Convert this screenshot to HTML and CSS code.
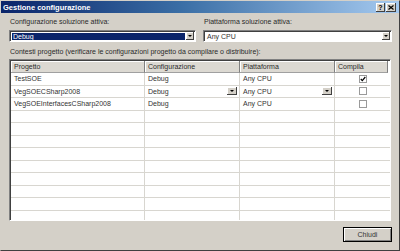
FILE: index.html
```html
<!DOCTYPE html>
<html>
<head>
<meta charset="utf-8">
<link rel="stylesheet" href="styles.css">
</head>
<body>
<div class="window">
  <div class="titlebar">
    <span class="title">Gestione configurazione</span>
    <div class="tbtns">
      <span class="tbtn help">?</span>
      <span class="tbtn close"><svg width="6" height="5" viewBox="0 0 6 5"><path d="M0.5 0.5 L5.5 4.5 M5.5 0.5 L0.5 4.5" stroke="#000" stroke-width="1.2"/></svg></span>
    </div>
  </div>
  <div class="content">
    <div class="top">
      <div class="field">
        <div class="label">Configurazione soluzione attiva:</div>
        <div class="combo">
          <span class="val sel">Debug</span>
          <span class="arrow"><i class="tri"></i></span>
        </div>
      </div>
      <div class="field">
        <div class="label">Piattaforma soluzione attiva:</div>
        <div class="combo">
          <span class="val">Any CPU</span>
          <span class="arrow"><i class="tri"></i></span>
        </div>
      </div>
    </div>
    <div class="caption">Contesti progetto (verificare le configurazioni progetto da compilare o distribuire):</div>
    <div class="list">
      <div class="grid">
        <div class="hd">Progetto</div>
        <div class="hd">Configurazione</div>
        <div class="hd">Piattaforma</div>
        <div class="hd last">Compila</div>

        <div class="c">TestSOE</div>
        <div class="c">Debug</div>
        <div class="c">Any CPU</div>
        <div class="c chk"><span class="box"><svg width="6" height="6" viewBox="0 0 6 6"><path d="M0.8 3 L2.3 4.6 L5.3 1" fill="none" stroke="#000" stroke-width="1.2"/></svg></span></div>

        <div class="c">VegSOECSharp2008</div>
        <div class="c">Debug<span class="dd"><i class="tri"></i></span></div>
        <div class="c">Any CPU<span class="dd"><i class="tri"></i></span></div>
        <div class="c chk"><span class="box"></span></div>

        <div class="c">VegSOEInterfacesCSharp2008</div>
        <div class="c">Debug</div>
        <div class="c">Any CPU</div>
        <div class="c chk"><span class="box"></span></div>

        <div class="c"></div><div class="c"></div><div class="c"></div><div class="c"></div>
        <div class="c"></div><div class="c"></div><div class="c"></div><div class="c"></div>
        <div class="c"></div><div class="c"></div><div class="c"></div><div class="c"></div>
        <div class="c"></div><div class="c"></div><div class="c"></div><div class="c"></div>
        <div class="c"></div><div class="c"></div><div class="c"></div><div class="c"></div>
        <div class="c"></div><div class="c"></div><div class="c"></div><div class="c"></div>
        <div class="c"></div><div class="c"></div><div class="c"></div><div class="c"></div>
        <div class="c"></div><div class="c"></div><div class="c"></div><div class="c"></div>
        <div class="c"></div><div class="c"></div><div class="c"></div><div class="c"></div>
      </div>
    </div>
    <div class="footer">
      <button class="btn">Chiudi</button>
    </div>
  </div>
</div>
</body>
</html>
```
FILE: styles.css
```css
* { box-sizing: border-box; margin: 0; padding: 0; }
html, body { width: 400px; height: 251px; overflow: hidden; }
body {
  background: #d4d0c8;
  font-family: "Liberation Sans", Arial, sans-serif;
  font-size: 7px;
  color: #2a2a2a;
}
.window {
  width: 400px;
  height: 251px;
  border: 1px solid;
  border-color: #d4d0c8 #404040 #404040 #d4d0c8;
  display: flex;
  flex-direction: column;
}
.titlebar {
  height: 12px;
  flex: none;
  display: flex;
  align-items: center;
  padding: 0 3px 0 2px;
  background: linear-gradient(to right, #0a246a 0%, #3a6ea5 45%, #a6caf0 100%);
  color: #fff;
  font-weight: bold;
  font-size: 7.5px;
}
.tbtns { margin-left: auto; display: flex; gap: 1px; }
.tbtn {
  width: 9px;
  height: 9px;
  background: #d4d0c8;
  box-shadow: inset -1px -1px #404040, inset 1px 1px #fff;
  display: flex;
  align-items: center;
  justify-content: center;
  color: #000;
  font-size: 7px;
  line-height: 9px;
}
.tbtn.close { width: 10px; }
.content {
  flex: 1;
  padding: 4px 7px 0 8px;
  display: flex;
  flex-direction: column;
}
.top {
  display: grid;
  grid-template-columns: 187px 189px;
  column-gap: 7px;
}
.label { height: 10px; line-height: 10px; padding-left: 1px; margin-bottom: 3px; }
.combo {
  height: 12px;
  display: flex;
  align-items: stretch;
  background: #fff;
  border: 1px solid;
  border-color: #808080 #fff #fff #808080;
  box-shadow: inset 1px 1px #404040;
  padding: 2px 1px 1px 2px;
}
.val { flex: 1; line-height: 8px; padding-left: 1px; color: #333; }
.val.sel { background: #0a246a; color: #fff; margin-right: 1px; }
.arrow {
  width: 8px;
  margin-top: -1px;
  background: #d4d0c8;
  box-shadow: inset -1px -1px #404040, inset 1px 1px #fff;
  display: flex;
  align-items: center;
  justify-content: center;
}
.tri {
  display: block;
  width: 0;
  height: 0;
  border-left: 2px solid transparent;
  border-right: 2px solid transparent;
  border-top: 2px solid #000;
}
.caption { margin-top: 5px; height: 10px; line-height: 10px; padding-left: 1px; }
.list {
  width: 382px;
  height: 162px;
  margin-top: 2px;
  border: 1px solid;
  border-color: #808080 #fff #fff #808080;
  background: #fff;
  overflow: hidden;
}
.grid {
  display: grid;
  grid-template-columns: 134px 95px 95px 1fr;
  grid-template-rows: 12px;
  grid-auto-rows: 12.5px;
  border-left: 1px solid #404040;
  border-top: 1px solid #404040;
  height: 161px;
  overflow: hidden;
}
.hd {
  background: #dcd9d2;
  border-right: 1px solid #808080;
  border-bottom: 1px solid #a0a0a0;
  box-shadow: inset 1px 1px #fff;
  padding-left: 3px;
  line-height: 11px;
  white-space: nowrap;
}
.hd.last { margin-right: 2px; }
.c {
  border-right: 1px solid #d8d6d0;
  border-bottom: 1px solid #d8d6d0;
  padding-left: 3px;
  line-height: 11px;
  white-space: nowrap;
  display: flex;
  align-items: center;
  color: #333;
}
.c:nth-child(4n) { border-right: none; }
.dd {
  margin-left: auto;
  margin-right: 2px;
  width: 10px;
  height: 8px;
  background: #d4d0c8;
  box-shadow: inset -1px -1px #404040, inset 1px 1px #fff;
  display: flex;
  align-items: center;
  justify-content: center;
}
.chk { justify-content: center; padding-left: 0; }
.box {
  width: 8px;
  height: 8px;
  border: 1px solid #9a9a9a;
  background: #fff;
  display: flex;
  align-items: center;
  justify-content: center;
}
.footer { display: flex; justify-content: flex-end; margin-top: 6px; }
.btn {
  width: 49px;
  height: 15px;
  font-family: "Liberation Sans", Arial, sans-serif;
  font-size: 7px;
  color: #333;
  background: #d4d0c8;
  border: 1px solid #000;
  box-shadow: inset 1px 1px #fff, inset -1px -1px #808080;
}
```
